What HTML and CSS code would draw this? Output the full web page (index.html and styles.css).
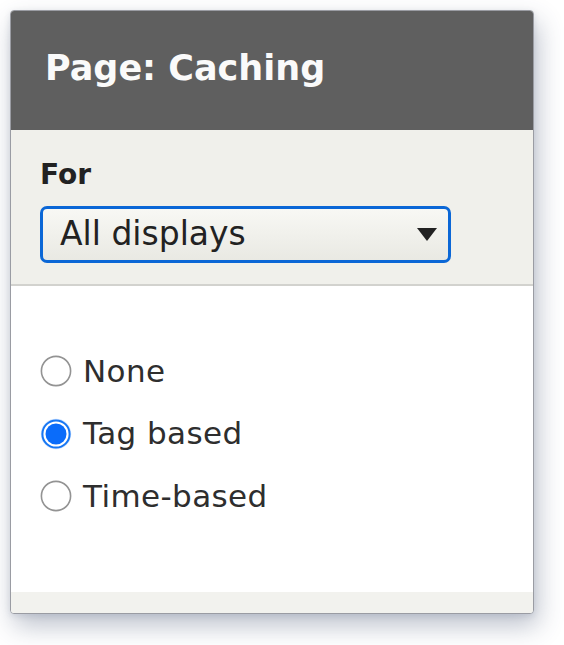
FILE: index.html
```html
<!DOCTYPE html>
<html lang="en">
<head>
<meta charset="utf-8">
<title>Page: Caching</title>
<link rel="stylesheet" href="styles.css">
</head>
<body>
<div class="dialog">
  <div class="dialog-header">
    <h1 class="dialog-title">Page: Caching</h1>
  </div>
  <div class="scope">
    <div class="scope-label">For</div>
    <div class="select">
      <span class="select-value">All displays</span>
      <svg class="select-arrow" width="20" height="13" viewBox="0 0 20 13"><path d="M0 0 H20 L10 13 Z" fill="#222"/></svg>
    </div>
  </div>
  <div class="options">
    <label class="radio-row">
      <svg class="radio" width="32" height="32" viewBox="0 0 32 32"><circle cx="16" cy="16" r="14.6" fill="#fff" stroke="#939393" stroke-width="1.6"/></svg>
      <span class="radio-label">None</span>
    </label>
    <label class="radio-row">
      <svg class="radio" width="32" height="32" viewBox="0 0 32 32"><circle cx="16" cy="16" r="15.2" fill="#cfe3ff"/><circle cx="16" cy="16" r="13.6" fill="#fff" stroke="#1676f3" stroke-width="2"/><circle cx="16" cy="16" r="10.5" fill="#0a6cfa"/></svg>
      <span class="radio-label">Tag based</span>
    </label>
    <label class="radio-row">
      <svg class="radio" width="32" height="32" viewBox="0 0 32 32"><circle cx="16" cy="16" r="14.6" fill="#fff" stroke="#939393" stroke-width="1.6"/></svg>
      <span class="radio-label">Time-based</span>
    </label>
  </div>
  <div class="dialog-footer"></div>
</div>
</body>
</html>
```

FILE: styles.css
```css
html, body {
  margin: 0;
  padding: 0;
  background: #ffffff;
}

body {
  font-family: "DejaVu Sans", "Liberation Sans", sans-serif;
  color: #333;
  min-height: 645px;
}

.dialog {
  box-sizing: border-box;
  margin: 10px 0 0 10px;
  width: 524px;
  height: 604px;
  border: 1px solid #9a9ca3;
  border-radius: 4px;
  overflow: hidden;
  display: flex;
  flex-direction: column;
  background: #fff;
  box-shadow: 4px 12px 26px rgba(50, 65, 100, 0.32), 0 2px 6px rgba(50, 65, 100, 0.12);
}

.dialog-header {
  height: 119px;
  background: #5f5f5f;
  display: flex;
  align-items: center;
  padding: 0 0 4px 34px;
  box-sizing: border-box;
}

.dialog-title {
  margin: 0;
  font-size: 35px;
  font-weight: bold;
  color: #fafafa;
  line-height: 1;
}

.scope {
  height: 156px;
  box-sizing: border-box;
  background: #f0f0eb;
  border-bottom: 2px solid #d2d2ce;
  padding: 28px 0 0 29px;
}

.scope-label {
  font-size: 28px;
  font-weight: bold;
  color: #222;
  line-height: 34px;
  margin-bottom: 14px;
}

.select {
  box-sizing: border-box;
  width: 411px;
  height: 57px;
  border: 3px solid #0b67d6;
  border-radius: 7px;
  background: linear-gradient(#f8f8f4, #e9e9e3);
  display: flex;
  align-items: center;
  justify-content: space-between;
  padding: 0 11px 0 17px;
}

.select-value {
  font-size: 33px;
  color: #222;
  line-height: 1;
  padding-bottom: 2px;
}

.select-arrow {
  display: block;
}

.options {
  flex: 1;
  padding: 54px 0 0 29px;
}

.radio-row {
  display: flex;
  align-items: center;
  height: 62.5px;
  gap: 11px;
}

.radio {
  display: block;
  flex: none;
}

.radio-label {
  font-size: 31px;
  color: #2e2e2e;
  line-height: 1;
  letter-spacing: 0.4px;
}

.dialog-footer {
  height: 21px;
  background: #f2f2ee;
}
```
